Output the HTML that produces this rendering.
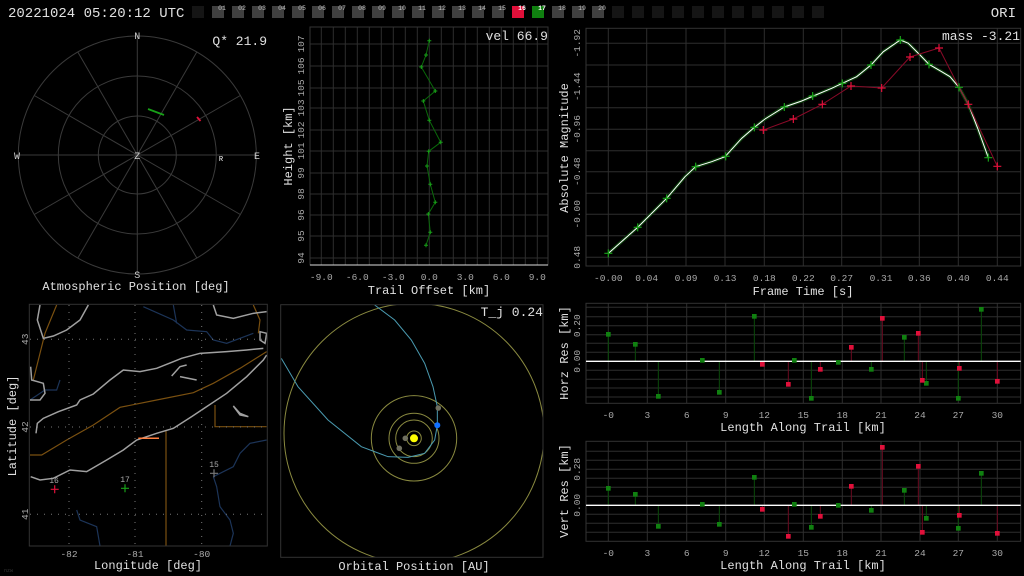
<!DOCTYPE html>
<html><head><meta charset="utf-8"><style>
html,body{margin:0;padding:0;background:#000;width:1024px;height:576px;overflow:hidden}
svg{display:block}
text{font-family:"Liberation Mono","DejaVu Sans Mono",monospace}
.ns{vector-effect:non-scaling-stroke}
</style></head><body>
<svg width="1024" height="576" viewBox="0 0 1024 576" xmlns="http://www.w3.org/2000/svg">
<rect width="1024" height="576" fill="#000"/>
<!-- top bar -->
<text x="8" y="17" fill="#e0e0e0" font-size="14">20221024 05:20:12 UTC</text>
<text x="1016" y="17" fill="#e0e0e0" font-size="14" text-anchor="end">ORI</text>
<g>
<rect x="192" y="6" width="12" height="12" fill="#151515"/>
<g fill="#404040">
<rect x="212" y="6" width="12" height="12"/><rect x="232" y="6" width="12" height="12"/><rect x="252" y="6" width="12" height="12"/><rect x="272" y="6" width="12" height="12"/><rect x="292" y="6" width="12" height="12"/><rect x="312" y="6" width="12" height="12"/><rect x="332" y="6" width="12" height="12"/><rect x="352" y="6" width="12" height="12"/><rect x="372" y="6" width="12" height="12"/><rect x="392" y="6" width="12" height="12"/><rect x="412" y="6" width="12" height="12"/><rect x="432" y="6" width="12" height="12"/><rect x="452" y="6" width="12" height="12"/><rect x="472" y="6" width="12" height="12"/><rect x="492" y="6" width="12" height="12"/>
<rect x="552" y="6" width="12" height="12"/><rect x="572" y="6" width="12" height="12"/><rect x="592" y="6" width="12" height="12"/>
</g>
<rect x="512" y="6" width="12" height="12" fill="#e0103a"/>
<rect x="532" y="6" width="12" height="12" fill="#108010"/>
<g fill="#151515">
<rect x="612" y="6" width="12" height="12"/><rect x="632" y="6" width="12" height="12"/><rect x="652" y="6" width="12" height="12"/><rect x="672" y="6" width="12" height="12"/><rect x="692" y="6" width="12" height="12"/><rect x="712" y="6" width="12" height="12"/><rect x="732" y="6" width="12" height="12"/><rect x="752" y="6" width="12" height="12"/><rect x="772" y="6" width="12" height="12"/><rect x="792" y="6" width="12" height="12"/><rect x="812" y="6" width="12" height="12"/>
</g>
<g font-size="6.5" fill="#bbb" text-anchor="middle">
<text x="222" y="10">01</text><text x="242" y="10">02</text><text x="262" y="10">03</text><text x="282" y="10">04</text><text x="302" y="10">05</text><text x="322" y="10">06</text><text x="342" y="10">07</text><text x="362" y="10">08</text><text x="382" y="10">09</text><text x="402" y="10">10</text><text x="422" y="10">11</text><text x="442" y="10">12</text><text x="462" y="10">13</text><text x="482" y="10">14</text><text x="502" y="10">15</text>
<text x="522" y="10" fill="#fff" font-weight="bold">16</text><text x="542" y="10" fill="#fff" font-weight="bold">17</text>
<text x="562" y="10">18</text><text x="582" y="10">19</text><text x="602" y="10">20</text>
</g>
</g>

<!-- polar -->
<g stroke="#3a3a3a" fill="none" stroke-width="1">
<circle cx="137.3" cy="155" r="39"/><circle cx="137.3" cy="155" r="79"/><circle cx="137.3" cy="155" r="119"/>
<g transform="translate(137.3,155)">
<line x1="0" y1="-119" x2="0" y2="119"/><line x1="-119" y1="0" x2="119" y2="0"/>
<line x1="59.5" y1="-103" x2="-59.5" y2="103"/><line x1="103" y1="-59.5" x2="-103" y2="59.5"/>
<line x1="-59.5" y1="-103" x2="59.5" y2="103"/><line x1="-103" y1="-59.5" x2="103" y2="59.5"/>
</g>
</g>
<g fill="#ccc" font-size="10" text-anchor="middle">
<text x="137.3" y="39">N</text><text x="137.3" y="278">S</text><text x="17" y="159">W</text><text x="257" y="159">E</text><text x="137.3" y="159">Z</text>
</g>
<text x="221" y="161" fill="#fff" font-size="7" text-anchor="middle">R</text>
<line x1="148" y1="109" x2="164" y2="115" stroke="#18a018" stroke-width="1.8"/>
<line x1="197" y1="117" x2="200.5" y2="121" stroke="#e0103a" stroke-width="1.8"/>
<text x="267" y="45" fill="#e0e0e0" font-size="13" text-anchor="end">Q* 21.9</text>
<text x="136" y="290" fill="#e0e0e0" font-size="12" text-anchor="middle">Atmospheric Position [deg]</text>

<!-- height plot -->
<g stroke="#2e2e2e" stroke-width="1">
<path d="M321.3 27V265M333.3 27V265M345.3 27V265M357.3 27V265M369.3 27V265M381.3 27V265M393.3 27V265M405.3 27V265M417.3 27V265M429.3 27V265M441.3 27V265M453.3 27V265M465.3 27V265M477.3 27V265M489.3 27V265M501.3 27V265M513.3 27V265M525.3 27V265M537.3 27V265"/>
<path d="M310 44H548M310 66H548M310 88H548M310 108H548M310 130H548M310 151H548M310 173H548M310 194H548M310 215H548M310 236H548M310 258H548"/>
<rect x="310" y="27" width="238" height="238" fill="none" stroke="#333"/>
</g>
<line x1="310" y1="265" x2="548" y2="265" stroke="#ddd"/>
<polyline fill="none" stroke="#0a6a0a" points="429.3,40.7 426,55 421.3,67 435.3,91 423.3,101 429.3,120.3 440.7,142.3 428.7,151.3 427,166 430.3,184.3 435.3,202.3 428.3,214 430.3,232.3 426,245.3"/>
<g stroke="#18a018" stroke-width="1">
<path d="M427.3 40.7h4M429.3 38.7v4M424 55h4M426 53v4M419.3 67h4M421.3 65v4M433.3 91h4M435.3 89v4M421.3 101h4M423.3 99v4M427.3 120.3h4M429.3 118.3v4M438.7 142.3h4M440.7 140.3v4M426.7 151.3h4M428.7 149.3v4M425 166h4M427 164v4M428.3 184.3h4M430.3 182.3v4M433.3 202.3h4M435.3 200.3v4M426.3 214h4M428.3 212v4M428.3 232.3h4M430.3 230.3v4M424 245.3h4M426 243.3v4"/>
</g>
<g fill="#aaa" font-size="9.5" text-anchor="middle">
<text transform="translate(304,44) rotate(-90)">107</text><text transform="translate(304,66) rotate(-90)">106</text><text transform="translate(304,88) rotate(-90)">105</text><text transform="translate(304,108) rotate(-90)">103</text><text transform="translate(304,130) rotate(-90)">102</text><text transform="translate(304,151) rotate(-90)">101</text><text transform="translate(304,173) rotate(-90)">99</text><text transform="translate(304,194) rotate(-90)">98</text><text transform="translate(304,215) rotate(-90)">96</text><text transform="translate(304,236) rotate(-90)">95</text><text transform="translate(304,258) rotate(-90)">94</text>
<text x="321.3" y="280">-9.0</text><text x="357.3" y="280">-6.0</text><text x="393.3" y="280">-3.0</text><text x="429.3" y="280">0.0</text><text x="465.3" y="280">3.0</text><text x="501.3" y="280">6.0</text><text x="537.3" y="280">9.0</text>
</g>
<text x="429" y="294" fill="#e0e0e0" font-size="12" text-anchor="middle">Trail Offset [km]</text>
<text transform="translate(292,146) rotate(-90)" fill="#e0e0e0" font-size="12" text-anchor="middle">Height [km]</text>
<text x="548" y="40" fill="#e0e0e0" font-size="13" text-anchor="end">vel 66.9</text>

<!-- magnitude plot -->
<g stroke="#2e2e2e">
<path d="M608.3 28V266M646.7 28V266M686 28V266M725 28V266M764.3 28V266M803.3 28V266M841.7 28V266M881 28V266M919.3 28V266M958.3 28V266M997.3 28V266"/>
<path d="M586 43.3H1021M586 65H1021M586 86.7H1021M586 107.7H1021M586 129.3H1021M586 150.7H1021M586 171.7H1021M586 193.3H1021M586 214.3H1021M586 235.7H1021M586 257.3H1021"/>
<rect x="586" y="28.3" width="434.7" height="237.7" fill="none" stroke="#333"/>
</g>
<g transform="translate(555,25) scale(0.33333)" fill="none">
<polyline class="ns" stroke="#0a3a0a" stroke-width="3.5" points="160,685 248,607 335,520 390,455 422,425 470,410 510,395 560,340 598,307 630,282 688,246 740,228 775,213 830,190 862,175 905,155 948,120 985,80 1036,45 1060,55 1095,90 1122,118 1160,140 1185,155 1212,187 1240,238 1270,315 1300,398"/>
<polyline class="ns" stroke="#fff" stroke-width="1" points="160,685 248,607 335,520 390,455 422,425 470,410 510,395 560,340 598,307 630,282 688,246 740,228 775,213 830,190 862,175 905,155 948,120 985,80 1036,45 1060,55 1095,90 1122,118 1160,140 1185,155 1212,187 1240,238 1270,315 1300,398"/>
<polyline class="ns" stroke="#8a0a28" stroke-width="1" points="625,315 715,282 802,238 888,183 980,189 1065,96 1152,69 1212,187 1240,238 1327,424"/>
<path class="ns" stroke="#e0103a" stroke-width="1.2" d="M613 315h24M625 303v24M703 282h24M715 270v24M790 238h24M802 226v24M876 183h24M888 171v24M968 189h24M980 177v24M1053 96h24M1065 84v24M1140 69h24M1152 57v24M1228 238h24M1240 226v24M1315 424h24M1327 412v24"/>
<path class="ns" stroke="#18a018" stroke-width="1.2" d="M148 685h24M160 673v24M236 607h24M248 595v24M323 520h24M335 508v24M410 425h24M422 413v24M500 394h24M512 382v24M586 307h24M598 295v24M676 246h24M688 234v24M761 213h24M773 201v24M850 175h24M862 163v24M936 120h24M948 108v24M1024 45h24M1036 33v24M1110 118h24M1122 106v24M1200 187h24M1212 175v24M1288 398h24M1300 386v24"/>
</g>
<g fill="#aaa" font-size="9.5" text-anchor="middle">
<text transform="translate(580,43.3) rotate(-90)">-1.92</text><text transform="translate(580,86.7) rotate(-90)">-1.44</text><text transform="translate(580,129.3) rotate(-90)">-0.96</text><text transform="translate(580,171.7) rotate(-90)">-0.48</text><text transform="translate(580,214.3) rotate(-90)">-0.00</text><text transform="translate(580,257.3) rotate(-90)">0.48</text>
<text x="608.3" y="281">-0.00</text><text x="646.7" y="281">0.04</text><text x="686" y="281">0.09</text><text x="725" y="281">0.13</text><text x="764.3" y="281">0.18</text><text x="803.3" y="281">0.22</text><text x="841.7" y="281">0.27</text><text x="881" y="281">0.31</text><text x="919.3" y="281">0.36</text><text x="958.3" y="281">0.40</text><text x="997.3" y="281">0.44</text>
</g>
<text x="803" y="295" fill="#e0e0e0" font-size="12" text-anchor="middle">Frame Time [s]</text>
<text transform="translate(568,148) rotate(-90)" fill="#e0e0e0" font-size="12" text-anchor="middle">Absolute Magnitude</text>
<text x="1020" y="40" fill="#e0e0e0" font-size="13" text-anchor="end">mass -3.21</text>

<!-- horz res -->
<g stroke="#2e2e2e">
<path d="M608.3 303V403M647.3 303V403M686.7 303V403M725.7 303V403M764.3 303V403M803.3 303V403M842.3 303V403M881 303V403M920 303V403M958.3 303V403M997.3 303V403"/>
<path d="M586 307.3H1021M586 316.7H1021M586 325.7H1021M586 334.7H1021M586 343.3H1021M586 352.3H1021M586 370.3H1021M586 379.3H1021M586 388H1021M586 397H1021"/>
<rect x="586" y="303.3" width="434.7" height="100" fill="none" stroke="#333"/>
</g>
<g transform="translate(555,300) scale(0.33333)">
<path class="ns" stroke="#0a4a0a" stroke-width="1" d="M160 184V103M241 184V133M310 184V289M442 184V181M493 184V277M598 184V49M718 184V181M769 184V295M850 184V187M949 184V208M1048 184V112M1114 184V250M1210 184V295M1279 184V28"/>
<path class="ns" stroke="#6a0a20" stroke-width="1" d="M622 184V193M700 184V253M796 184V208M889 184V142M982 184V55M1090 184V100M1102 184V241M1213 184V205M1327 184V244"/>
<line class="ns" x1="93" y1="184" x2="1397" y2="184" stroke="#fff" stroke-width="1.3"/>
<g fill="#108010"><rect x="153" y="96" width="14" height="14"/><rect x="234" y="126" width="14" height="14"/><rect x="303" y="282" width="14" height="14"/><rect x="435" y="174" width="14" height="14"/><rect x="486" y="270" width="14" height="14"/><rect x="591" y="42" width="14" height="14"/><rect x="711" y="174" width="14" height="14"/><rect x="762" y="288" width="14" height="14"/><rect x="843" y="180" width="14" height="14"/><rect x="942" y="201" width="14" height="14"/><rect x="1041" y="105" width="14" height="14"/><rect x="1107" y="243" width="14" height="14"/><rect x="1203" y="288" width="14" height="14"/><rect x="1272" y="21" width="14" height="14"/></g>
<g fill="#e0103a"><rect x="615" y="186" width="14" height="14"/><rect x="693" y="246" width="14" height="14"/><rect x="789" y="201" width="14" height="14"/><rect x="882" y="135" width="14" height="14"/><rect x="975" y="48" width="14" height="14"/><rect x="1083" y="93" width="14" height="14"/><rect x="1095" y="234" width="14" height="14"/><rect x="1206" y="198" width="14" height="14"/><rect x="1320" y="237" width="14" height="14"/></g>
</g>
<g fill="#aaa" font-size="9.5" text-anchor="middle">
<text transform="translate(580,325.7) rotate(-90)">0.20</text><text transform="translate(580,361.3) rotate(-90)">0.00</text>
<text x="608.3" y="418">-0</text><text x="647.3" y="418">3</text><text x="686.7" y="418">6</text><text x="725.7" y="418">9</text><text x="764.3" y="418">12</text><text x="803.3" y="418">15</text><text x="842.3" y="418">18</text><text x="881" y="418">21</text><text x="920" y="418">24</text><text x="958.3" y="418">27</text><text x="997.3" y="418">30</text>
</g>
<text x="803" y="431" fill="#e0e0e0" font-size="12" text-anchor="middle">Length Along Trail [km]</text>
<text transform="translate(568,353) rotate(-90)" fill="#e0e0e0" font-size="12" text-anchor="middle">Horz Res [km]</text>

<!-- vert res -->
<g stroke="#2e2e2e">
<path d="M608.3 441V541M647.3 441V541M686.7 441V541M725.7 441V541M764.3 441V541M803.3 441V541M842.3 441V541M881 441V541M920 441V541M958.3 441V541M997.3 441V541"/>
<path d="M586 451.3H1021M586 460.3H1021M586 469.3H1021M586 478.3H1021M586 487.3H1021M586 496.3H1021M586 514.3H1021M586 523.3H1021M586 532.3H1021"/>
<rect x="586" y="441.3" width="434.7" height="100" fill="none" stroke="#333"/>
</g>
<g transform="translate(555,438) scale(0.33333)">
<path class="ns" stroke="#0a4a0a" stroke-width="1" d="M160 202V151M241 202V169M310 202V265M442 202V199M493 202V259M598 202V118M718 202V199M769 202V268M850 202V202M949 202V217M1048 202V157M1114 202V241M1210 202V271M1279 202V106"/>
<path class="ns" stroke="#6a0a20" stroke-width="1" d="M622 202V214M700 202V295M796 202V235M889 202V145M982 202V28M1090 202V85M1102 202V283M1213 202V232M1327 202V286"/>
<line class="ns" x1="93" y1="202" x2="1397" y2="202" stroke="#fff" stroke-width="1.3"/>
<g fill="#108010"><rect x="153" y="144" width="14" height="14"/><rect x="234" y="162" width="14" height="14"/><rect x="303" y="258" width="14" height="14"/><rect x="435" y="192" width="14" height="14"/><rect x="486" y="252" width="14" height="14"/><rect x="591" y="111" width="14" height="14"/><rect x="711" y="192" width="14" height="14"/><rect x="762" y="261" width="14" height="14"/><rect x="843" y="195" width="14" height="14"/><rect x="942" y="210" width="14" height="14"/><rect x="1041" y="150" width="14" height="14"/><rect x="1107" y="234" width="14" height="14"/><rect x="1203" y="264" width="14" height="14"/><rect x="1272" y="99" width="14" height="14"/></g>
<g fill="#e0103a"><rect x="615" y="207" width="14" height="14"/><rect x="693" y="288" width="14" height="14"/><rect x="789" y="228" width="14" height="14"/><rect x="882" y="138" width="14" height="14"/><rect x="975" y="21" width="14" height="14"/><rect x="1083" y="78" width="14" height="14"/><rect x="1095" y="276" width="14" height="14"/><rect x="1206" y="225" width="14" height="14"/><rect x="1320" y="279" width="14" height="14"/></g>
</g>
<g fill="#aaa" font-size="9.5" text-anchor="middle">
<text transform="translate(580,469.3) rotate(-90)">0.28</text><text transform="translate(580,505.3) rotate(-90)">0.00</text>
<text x="608.3" y="556">-0</text><text x="647.3" y="556">3</text><text x="686.7" y="556">6</text><text x="725.7" y="556">9</text><text x="764.3" y="556">12</text><text x="803.3" y="556">15</text><text x="842.3" y="556">18</text><text x="881" y="556">21</text><text x="920" y="556">24</text><text x="958.3" y="556">27</text><text x="997.3" y="556">30</text>
</g>
<text x="803" y="569" fill="#e0e0e0" font-size="12" text-anchor="middle">Length Along Trail [km]</text>
<text transform="translate(568,491) rotate(-90)" fill="#e0e0e0" font-size="12" text-anchor="middle">Vert Res [km]</text>

<!-- map -->
<defs><clipPath id="mc"><rect x="29.3" y="304.3" width="238" height="241.7"/></clipPath></defs>
<g clip-path="url(#mc)">
<g transform="translate(0,300) scale(0.33333)" fill="none">
<g stroke="#1c3458" stroke-width="1.2">
<path class="ns" d="M640 530L650 560L660 620L690 660L700 700L690 738M640 530L700 500L720 460L750 430L800 420M230 630L240 660L290 680L300 738M430 20L520 60L560 90L620 95L640 120L680 130L760 100M90 300L135 270L170 270L180 240M520 15L530 70"/>
</g>
<g stroke="#7a5010" stroke-width="1.2">
<path class="ns" d="M100 240L125 140L135 100L170 15M90 465L125 465L200 420L280 375L360 322L470 300L580 278L640 250L720 205L800 155M498 390V738M645 315V380H800M760 15L780 60L775 100"/>
</g>
<g stroke="#a0a0a0" stroke-width="1.5">
<path class="ns" d="M120 15L112 60L130 115L160 108L200 90L240 60L265 15"/>
<path class="ns" d="M92 200L95 240L130 250L135 280L120 300L90 300"/>
<path class="ns" d="M108 400L112 370L130 355L175 335L230 315L240 300L280 282L330 240L370 210L420 215L470 205L520 185L545 175L600 160L680 155L740 150L790 145"/>
<path class="ns" d="M515 228L540 200L560 195M540 230L590 240"/>
<path class="ns" d="M92 530L120 540L160 535L210 510L260 515L320 480L370 450L410 420L470 400L520 385L575 350L620 320L680 280L740 230L790 180L800 165"/>
<path class="ns" d="M640 15L650 45L700 55L760 40L800 35M780 95L800 100L795 130L780 120Z"/>
<path class="ns" d="M700 318L720 340L745 350L720 345Z"/>
</g>
</g>
</g>
<rect x="29.3" y="304.3" width="238" height="241.7" fill="none" stroke="#333"/>
<g stroke="#777" stroke-width="1" stroke-dasharray="1 6">
<path d="M69 305V546M135 305V546M201.7 305V546M30 339.3H267M30 427H267M30 514.3H267"/>
</g>
<line x1="138.3" y1="438.3" x2="159" y2="438.3" stroke="#ff7f40" stroke-width="1.5"/>
<path d="M50.7 489.3h8M54.7 485.3v8" stroke="#e0103a" stroke-width="1.2"/>
<path d="M121 488.3h8M125 484.3v8" stroke="#18a018" stroke-width="1.2"/>
<path d="M210 473.3h8M214 469.3v8" stroke="#777" stroke-width="1.2"/>
<g fill="#aaa" font-size="8" text-anchor="middle"><text x="54" y="483">16</text><text x="125" y="482">17</text><text x="214" y="467">15</text></g>
<g fill="#aaa" font-size="9.5" text-anchor="middle">
<text x="69" y="557">-82</text><text x="135" y="557">-81</text><text x="201.7" y="557">-80</text>
<text transform="translate(28,339.3) rotate(-90)">43</text><text transform="translate(28,427) rotate(-90)">42</text><text transform="translate(28,514.3) rotate(-90)">41</text>
</g>
<text x="148" y="569" fill="#e0e0e0" font-size="12" text-anchor="middle">Longitude [deg]</text>
<text transform="translate(16,426) rotate(-90)" fill="#e0e0e0" font-size="12" text-anchor="middle">Latitude [deg]</text>
<text x="4" y="572" fill="#333" font-size="5">nzw</text>

<!-- orbital -->
<defs><clipPath id="oc"><rect x="280.7" y="304.7" width="262.3" height="252.6"/></clipPath></defs>
<g clip-path="url(#oc)" fill="none">
<circle cx="414" cy="433.3" r="130" stroke="#8a8a40" stroke-width="1"/>
<g stroke="#8a8a40" stroke-width="1">
<circle cx="414" cy="438.3" r="7.3"/><circle cx="414" cy="438.3" r="18.3"/><circle cx="414" cy="438.3" r="25"/><circle cx="414" cy="438.3" r="42.7"/>
</g>
<g transform="translate(278,300) scale(0.33333)">
<polyline class="ns" stroke="#4a9ab0" stroke-width="1" points="290,15 350,60 400,120 440,190 465,260 478,320 478,376 470,420 440,460 390,472 330,470 250,440 150,360 60,260 10,175"/>
</g>
</g>
<rect x="280.7" y="304.7" width="262.3" height="252.6" fill="none" stroke="#333"/>
<circle cx="414" cy="438.3" r="4" fill="#ffff00"/>
<circle cx="438.3" cy="408" r="2.8" fill="#707060"/>
<circle cx="405.3" cy="438.3" r="2.8" fill="#707060"/>
<circle cx="399.3" cy="448.3" r="2.8" fill="#707060"/>
<circle cx="437.3" cy="425.3" r="3" fill="#1070ff"/>
<text x="543" y="316" fill="#e0e0e0" font-size="13" text-anchor="end">T_j 0.24</text>
<text x="414" y="570" fill="#e0e0e0" font-size="12" text-anchor="middle">Orbital Position [AU]</text>
</svg>
</body></html>
